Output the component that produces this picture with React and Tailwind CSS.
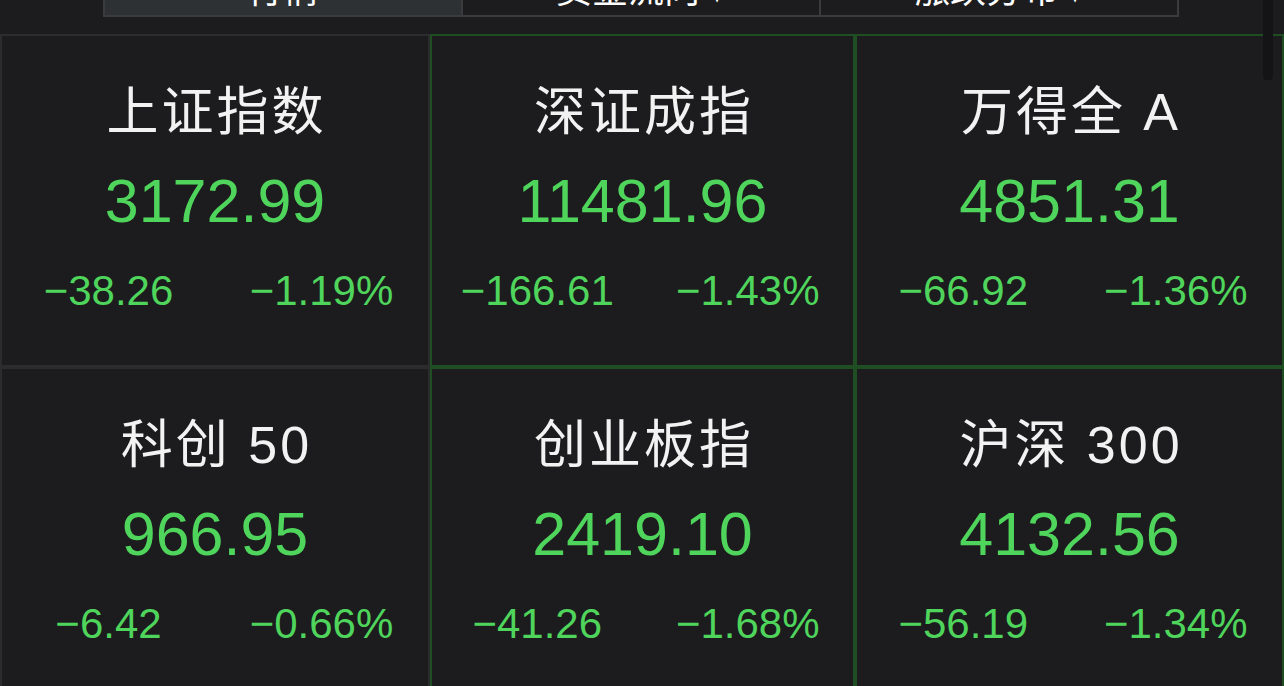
import React from "react";

const tabs = [
  { label: "行情", active: true },
  { label: "资金流向 ▾", active: false },
  { label: "涨跌分布 ▾", active: false },
];

const indices = [
  { name: "上证指数", price: "3172.99", change: "−38.26", pct: "−1.19%", tone: "gray" },
  { name: "深证成指", price: "11481.96", change: "−166.61", pct: "−1.43%", tone: "green" },
  { name: "万得全 A", price: "4851.31", change: "−66.92", pct: "−1.36%", tone: "green" },
  { name: "科创 50", price: "966.95", change: "−6.42", pct: "−0.66%", tone: "gray" },
  { name: "创业板指", price: "2419.10", change: "−41.26", pct: "−1.68%", tone: "green" },
  { name: "沪深 300", price: "4132.56", change: "−56.19", pct: "−1.34%", tone: "green" },
];

const numFont = { fontFamily: '"Liberation Sans", Arial, sans-serif' };

function IndexCard({ item }) {
  const border = item.tone === "green" ? "border-[#1f4e23]" : "border-[#2c2c2e]";
  return (
    <div className={`h-[333px] border-2 ${border} bg-[#1c1c1e] flex flex-col items-center pt-[48px]`}>
      <div
        className="h-[56px] leading-[56px] text-[52px] text-[#f2f2f2] tracking-[3px] pl-[3px]"
        style={{ fontFamily: '"Liberation Sans", "Noto Sans CJK SC", sans-serif' }}
      >
        {item.name}
      </div>
      <div className="mt-[25px] h-[72px] leading-[72px] text-[61px] text-[#4fd45c]" style={numFont}>
        {item.price}
      </div>
      <div className="mt-[29px] w-full grid grid-cols-2 h-[50px] leading-[50px] text-[42px] text-[#4fd45c]" style={numFont}>
        <div className="text-center">{item.change}</div>
        <div className="text-center">{item.pct}</div>
      </div>
    </div>
  );
}

export default function App() {
  return (
    <div className="relative w-[1284px] h-[686px] overflow-hidden bg-[#1c1c1e]">
      {/* segmented tab bar, mostly scrolled off */}
      <div className="h-[34px] flex justify-start pl-[103px]">
        <div className="-mt-[31px] h-[48px] w-[1076px] flex border-2 border-[#3a3b3d]">
          {tabs.map((t, i) => (
            <div
              key={t.label}
              className={`flex-1 text-center text-[36px] leading-[32px] text-white ${
                t.active ? "bg-[#2e3133]" : "bg-[#1c1c1e]"
              } ${i > 0 ? "border-l-2 border-[#3a3b3d]" : ""}`}
              style={{ fontFamily: '"Noto Sans CJK SC", sans-serif' }}
            >
              {t.label}
            </div>
          ))}
        </div>
      </div>

      <div className="grid grid-cols-[430px_425px_429px]">
        {indices.map((item) => (
          <IndexCard key={item.name} item={item} />
        ))}
      </div>

      {/* scrollbar thumb */}
      <div className="absolute right-[11px] top-0 w-[10px] h-[80px] bg-[#141416] rounded-b-sm" />
    </div>
  );
}
